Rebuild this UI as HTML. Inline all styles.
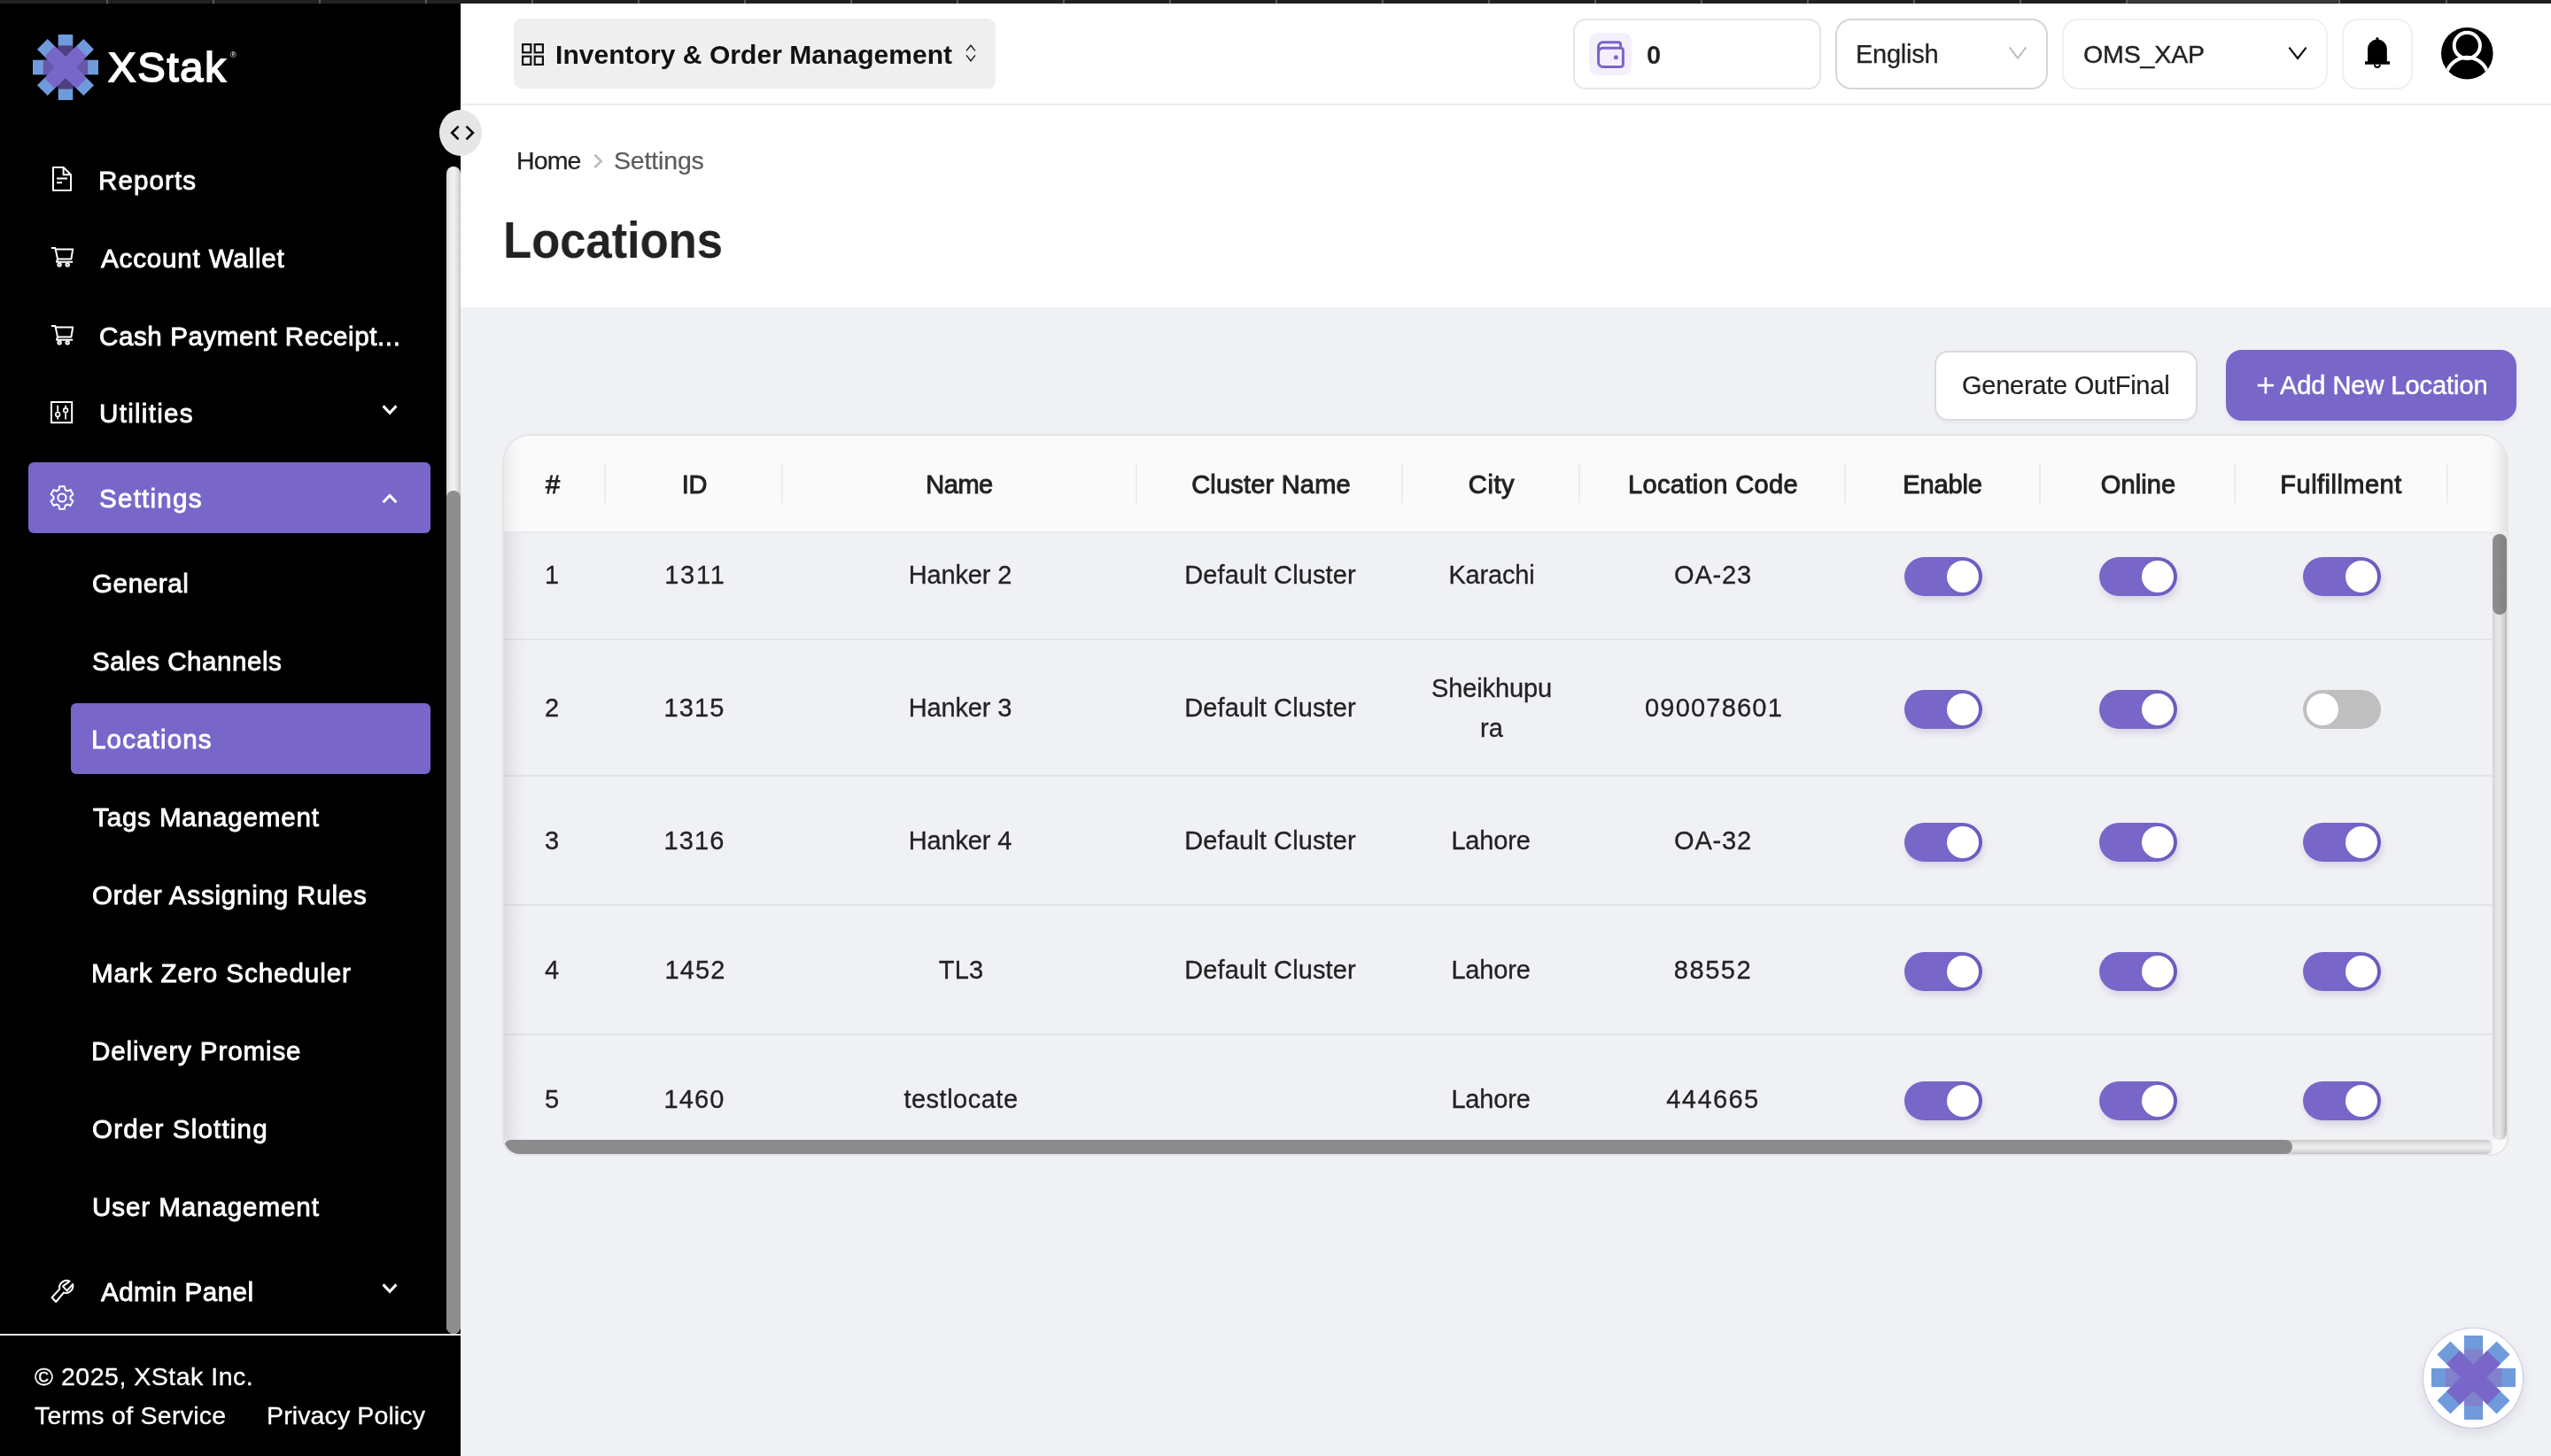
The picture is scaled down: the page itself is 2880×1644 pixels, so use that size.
<!DOCTYPE html>
<html><head><meta charset="utf-8"><title>Locations</title>
<style>
*{box-sizing:border-box;margin:0;padding:0}
html,body{width:2880px;height:1644px;overflow:hidden;background:#f0f1f5;font-family:"Liberation Sans",sans-serif;}
.a{position:absolute}
.t{position:absolute;white-space:nowrap;line-height:40px;height:40px;will-change:transform}
.tc{position:absolute;white-space:nowrap;line-height:40px;height:40px;text-align:center;will-change:transform}
svg{position:absolute;overflow:visible}
/* top strip */
#strip{left:0;top:0;width:2880px;height:4px;background:#212121}
#strip i{position:absolute;top:0;width:2px;height:4px;background:#5a5a5a}
/* sidebar */
#side{left:0;top:4px;width:520px;height:1640px;background:#000}
.pill{background:#7966c9;border-radius:6px}
#sbtrack{left:504px;top:188px;width:16px;height:1318px;border-radius:8px;background:linear-gradient(90deg,#d6d6d6 0,#ededed 28%,#f1f1f1 55%,#e0e0e0 78%,#c4c4c4 100%)}
#sbthumb{left:504px;top:554px;width:16px;height:952px;border-radius:8px;background:#8e8e8e}
/* header */
#hdr{left:520px;top:4px;width:2360px;height:115px;background:#fff;border-bottom:2px solid #ededed}
#phdr{left:520px;top:119px;width:2360px;height:227.5px;background:#fff}
#selpill{left:580px;top:21px;width:544px;height:79px;border-radius:9px;background:#efefef}
.box{background:#fff;border:2px solid #e6e6e6;border-radius:16px}
/* table */
#card{left:569px;top:492px;width:2261px;height:811px;border-radius:30px 30px 18px 18px;background:#f0f1f5;overflow:hidden;box-shadow:0 0 0 2px #e5e5e6}
#thead{left:0;top:0;width:2262px;height:110px;background:#fafafa;border-bottom:2px solid #ebebed}
.sep{position:absolute;top:32px;width:2px;height:44px;background:#ececec}
.rl{position:absolute;left:0;width:2245px;height:2px;background:#e2e3e8}
.sw{position:absolute;width:88px;height:44px;border-radius:22px;background:linear-gradient(90deg,#7966c9 0,#7966c9 55%,#6c59bd 100%);box-shadow:2px 5px 7px rgba(90,80,150,.17)}
.sw b{position:absolute;left:48px;top:4px;width:36px;height:36px;border-radius:18px;background:#fff}
.sw.off{background:#bfbfbf;box-shadow:none}
.sw.off b{left:4px}
</style></head><body>
<div id="strip" class="a"><i style="left:120px"></i><i style="left:240px"></i><i style="left:360px"></i><i style="left:480px"></i><i style="left:600px"></i><i style="left:720px"></i><i style="left:840px"></i><i style="left:960px"></i><i style="left:1080px"></i><i style="left:1200px"></i><i style="left:1320px"></i><i style="left:1440px"></i><i style="left:1560px"></i><i style="left:1680px"></i><i style="left:1800px"></i><i style="left:1920px"></i><i style="left:2040px"></i><i style="left:2160px"></i><i style="left:2280px"></i><div class="a" style="left:2400px;top:0;width:242px;height:3px;background:#3b3b3b"></div><i style="left:2400px"></i><i style="left:2640px"></i><i style="left:2761px"></i></div>

<!-- SIDEBAR -->
<div id="side" class="a"></div>
<svg style="left:37px;top:39px" width="74" height="74" viewBox="-37 -37 74 74">
<rect x="-8.3" y="-37" width="16.6" height="74" fill="#6f9bdc"/><rect x="-37" y="-8.3" width="74" height="16.6" fill="#6f9bdc"/>
<rect x="-8.3" y="-24.6" width="16.6" height="49.2" fill="#4e3e82"/><rect x="-25.2" y="-8.3" width="50.4" height="16.6" fill="#6757a8"/>
<g transform="rotate(45)"><rect x="-8.3" y="-37" width="16.6" height="74" fill="#6f9bdc"/><rect x="-37" y="-8.3" width="74" height="16.6" fill="#6f9bdc"/><rect x="-8.3" y="-25.5" width="16.6" height="51" fill="#7966c9"/><rect x="-25.5" y="-8.3" width="51" height="16.6" fill="#7966c9"/></g>
</svg>
<div class="a pill" style="left:32px;top:522px;width:454px;height:80px"></div>
<div class="a pill" style="left:80px;top:794px;width:406px;height:80px"></div>
<!-- icons -->
<svg style="left:59px;top:188px" width="22" height="28" viewBox="0 0 22 28" fill="none" stroke="#fff" stroke-width="2" stroke-linejoin="round"><path d="M1 1H12.6L21 9.2V27H1Z"/><path d="M12.6 1V9.2H21"/><path d="M5 13.6H17M5 18.2H11"/></svg>
<svg style="left:57.8px;top:279.4px" width="25" height="23" viewBox="0 0 25 23" fill="none" stroke="#fff" stroke-width="2" stroke-linejoin="round"><path d="M0 1H4.4L7 13.4H22.4L24.2 2.6H4.8"/><path d="M7 13.4L6 16.8H24.2"/><circle cx="9.1" cy="19.9" r="1.7"/><circle cx="18.2" cy="19.9" r="1.7"/></svg>
<svg style="left:57.8px;top:367.4px" width="25" height="23" viewBox="0 0 25 23" fill="none" stroke="#fff" stroke-width="2" stroke-linejoin="round"><path d="M0 1H4.4L7 13.4H22.4L24.2 2.6H4.8"/><path d="M7 13.4L6 16.8H24.2"/><circle cx="9.1" cy="19.9" r="1.7"/><circle cx="18.2" cy="19.9" r="1.7"/></svg>
<svg style="left:57.4px;top:453.4px" width="25.2" height="25.2" viewBox="0 0 25.2 25.2" fill="none" stroke="#fff" stroke-width="2"><rect x="1" y="1" width="23.2" height="23.2"/><path d="M8.2 4.8V11.8M8.2 18V20.6M17.1 4.8V7.2M17.1 13.4V20.6" stroke-width="1.8"/><circle cx="8.2" cy="14.9" r="2.4" stroke-width="1.6"/><circle cx="17.1" cy="10.3" r="2.4" stroke-width="1.6"/></svg>
<svg style="left:56px;top:548px" width="28" height="28" viewBox="0 0 28 28" fill="none" stroke="#fff" stroke-width="2" stroke-linejoin="round"><path d="M10.47 5.07 L11.03 1.34 L16.97 1.34 L17.53 5.07 L19.96 6.48 L23.48 5.10 L26.45 10.24 L23.50 12.60 L23.50 15.40 L26.45 17.76 L23.48 22.90 L19.96 21.52 L17.53 22.93 L16.97 26.66 L11.03 26.66 L10.47 22.93 L8.04 21.52 L4.52 22.90 L1.55 17.76 L4.50 15.40 L4.50 12.60 L1.55 10.24 L4.52 5.10 L8.04 6.48Z"/><circle cx="14" cy="14" r="4.6"/></svg>
<svg style="left:57.9px;top:1445px" width="26" height="26" viewBox="0 0 26 26" fill="none" stroke="#fff" stroke-width="2" stroke-linejoin="round"><path d="M20.6 1.6L13 7.4L17.6 12.4L24.2 5A8.2 8.2 0 0 1 13.8 14.6L5.2 25L0.6 20L9.2 10.6A8.2 8.2 0 0 1 20.6 1.6Z"/></svg>
<!-- chevrons -->
<svg style="left:431px;top:456.4px" width="18" height="14" viewBox="0 0 18 14" fill="none" stroke="#fff" stroke-width="3"><path d="M1.6 2.4L9 10.2L16.4 2.4"/></svg>
<svg style="left:431px;top:556.2px" width="18" height="14" viewBox="0 0 18 14" fill="none" stroke="#fff" stroke-width="3"><path d="M1.6 11.2L9 3.4L16.4 11.2"/></svg>
<svg style="left:431px;top:1448.4px" width="18" height="14" viewBox="0 0 18 14" fill="none" stroke="#fff" stroke-width="3"><path d="M1.6 2.4L9 10.2L16.4 2.4"/></svg>
<div id="sbtrack" class="a"></div><div id="sbthumb" class="a"></div>
<div class="a" style="left:0;top:1506px;width:520px;height:2px;background:#e8e8e8"></div>

<!-- HEADER -->
<div id="hdr" class="a"></div><div id="phdr" class="a"></div>
<div id="selpill" class="a"></div>
<svg style="left:588.5px;top:48.6px" width="25" height="25" viewBox="0 0 25 25" fill="none" stroke="#111" stroke-width="2.2"><rect x="1.1" y="1.1" width="9.2" height="9.2"/><rect x="14.7" y="1.1" width="9.2" height="9.2"/><rect x="1.1" y="14.7" width="9.2" height="9.2"/><rect x="14.7" y="14.7" width="9.2" height="9.2"/></svg>
<svg style="left:1090px;top:50px" width="12" height="20" viewBox="0 0 12 20" fill="none" stroke="#222" stroke-width="1.5"><path d="M1 7.4L6 1.2L11 7.4M1 12.4L6 18.8L11 12.4"/></svg>
<div class="a" style="left:495.8px;top:124px;width:48.4px;height:52px;border-radius:24.2px/26px;background:#e6e6e6"></div>
<svg style="left:506px;top:140px" width="32" height="20" viewBox="0 0 32 20" fill="none" stroke="#000" stroke-width="2.6"><path d="M11.6 2.6L4.2 10L11.6 17.4M20.5 2.6L27.9 10L20.5 17.4"/></svg>
<svg style="left:670px;top:173px" width="12" height="18" viewBox="0 0 12 18" fill="none" stroke="#bdbdbd" stroke-width="2.6"><path d="M1.3 1.7L8.8 9L1.3 16.3"/></svg>

<div class="a box" style="left:1776px;top:21px;width:280px;height:80px;border-radius:14px"></div>
<div class="a" style="left:1794px;top:37px;width:48px;height:48px;border-radius:9px;background:#f4effd"></div>
<svg style="left:1802.6px;top:45.6px" width="31" height="31" viewBox="0 0 31 31" fill="none" stroke="#7966c9" stroke-width="3" stroke-linejoin="round" stroke-linecap="round"><path d="M1.6 12V6.6A4.8 4.8 0 0 1 6.4 1.8H24A2.6 2.6 0 0 1 26.6 4.4V8"/><path d="M6.4 8.2H27A2.4 2.4 0 0 1 29.4 10.6V27A2.4 2.4 0 0 1 27 29.4H6.4A4.8 4.8 0 0 1 1.6 24.6V13A4.8 4.8 0 0 1 6.4 8.2Z"/><circle cx="21.4" cy="18.7" r="1.3" fill="#7966c9" stroke-width="2.4"/></svg>
<div class="a box" style="left:2072px;top:21px;width:240px;height:80px;border-color:#d6d6d6;border-radius:18px"></div>
<svg style="left:2267px;top:52px" width="22" height="16" viewBox="0 0 22 16" fill="none" stroke="#bdbdbd" stroke-width="2"><path d="M1.6 1.4L11 13.6L20.4 1.4"/></svg>
<div class="a box" style="left:2328px;top:21px;width:300px;height:80px;border-color:#f0f0f0;border-radius:18px"></div>
<svg style="left:2583px;top:52px" width="22" height="16" viewBox="0 0 22 16" fill="none" stroke="#111" stroke-width="2.2"><path d="M1.4 1.6L11 14L20.6 1.6"/></svg>
<div class="a box" style="left:2644px;top:21px;width:80px;height:80px;border-color:#f0f0f0;border-radius:18px"></div>
<svg style="left:2670px;top:42.4px" width="28" height="36" viewBox="0 0 28 36"><path d="M12.4 2.6V1.4A1.5 1.5 0 0 1 15.4 1.4V2.6A11 11 0 0 1 24.8 13.6V27.2H28V30.8H0V27.2H3V13.6A11 11 0 0 1 12.4 2.6Z" fill="#000"/><path d="M10.9 31A3 3 0 0 0 16.9 31" fill="none" stroke="#000" stroke-width="1.8"/></svg>
<svg style="left:2755.8px;top:31px" width="58.6" height="58.6" viewBox="0 0 58.6 58.6"><defs><clipPath id="avc"><circle cx="29.3" cy="29.3" r="29.3"/></clipPath></defs><circle cx="29.3" cy="29.3" r="29.3" fill="#000"/><g clip-path="url(#avc)" fill="none" stroke="#fff" stroke-width="4"><circle cx="29.3" cy="20.4" r="14.6"/><path d="M6 52A24 24 0 0 1 52.6 52"/></g></svg>

<!-- BUTTONS -->
<div class="a" style="left:2183.5px;top:395.5px;width:297px;height:79px;border-radius:15px;background:#fff;border:2px solid #dadada;box-shadow:0 3px 3px rgba(0,0,0,.03)"></div>
<div class="a" style="left:2513px;top:395px;width:328px;height:80px;border-radius:18px;background:#7966c9;box-shadow:0 4px 4px rgba(80,70,140,.08)"></div>

<svg style="left:2548px;top:425px" width="20" height="20" viewBox="0 0 20 20" fill="none" stroke="#fff" stroke-width="2.7"><path d="M0.7 10.2H19M9.85 1V19.4"/></svg>
<!-- TABLE -->
<div id="card" class="a">
<div id="thead" class="a"></div>
<i class="sep" style="left:113px"></i><i class="sep" style="left:313px"></i><i class="sep" style="left:713px"></i><i class="sep" style="left:1013px"></i><i class="sep" style="left:1213px"></i><i class="sep" style="left:1513px"></i><i class="sep" style="left:1733px"></i><i class="sep" style="left:1953px"></i><i class="sep" style="left:2193px"></i>
<i class="rl" style="top:229px"></i><i class="rl" style="top:383px"></i><i class="rl" style="top:529px"></i><i class="rl" style="top:675px"></i>
<div class="a" style="left:0;top:0;width:22px;height:110px;background:linear-gradient(90deg,rgba(40,40,50,.07),rgba(40,40,50,.02) 50%,rgba(40,40,50,0))"></div><div class="a" style="left:0;top:110px;width:24px;height:686px;background:linear-gradient(90deg,rgba(50,50,80,.10),rgba(50,50,80,.03) 55%,rgba(50,50,80,0))"></div>
<div class="a" style="left:2243px;top:0;width:18px;height:108px;background:linear-gradient(90deg,rgba(30,30,30,0),rgba(30,30,30,.035) 45%,rgba(30,30,30,.105))"></div>
<!-- toggles -->
<div class="sw" style="left:1581px;top:137px"><b></b></div><div class="sw" style="left:1801px;top:137px"><b></b></div><div class="sw" style="left:2031px;top:137px"><b></b></div>
<div class="sw" style="left:1581px;top:287px"><b></b></div><div class="sw" style="left:1801px;top:287px"><b></b></div><div class="sw off" style="left:2031px;top:287px"><b></b></div>
<div class="sw" style="left:1581px;top:437px"><b></b></div><div class="sw" style="left:1801px;top:437px"><b></b></div><div class="sw" style="left:2031px;top:437px"><b></b></div>
<div class="sw" style="left:1581px;top:583px"><b></b></div><div class="sw" style="left:1801px;top:583px"><b></b></div><div class="sw" style="left:2031px;top:583px"><b></b></div>
<div class="sw" style="left:1581px;top:729px"><b></b></div><div class="sw" style="left:1801px;top:729px"><b></b></div><div class="sw" style="left:2031px;top:729px"><b></b></div>
<!-- scrollbars -->
<div class="a" style="left:2245px;top:110px;width:16px;height:685px;border-radius:8px;background:linear-gradient(90deg,#d2d2d2 0,#e4e4e4 25%,#e6e6e6 50%,#d4d4d4 75%,#b9b9b9 100%)"></div>
<div class="a" style="left:2245px;top:111px;width:16px;height:91px;border-radius:8px;background:linear-gradient(90deg,#8f8f8f,#888 60%,#808080)"></div>
<div class="a" style="left:0;top:795px;width:2245px;height:16px;border-radius:8px;background:linear-gradient(180deg,#c6c6c6 0,#e2e2e2 25%,#eeeeee 55%,#dcdcdc 78%,#c2c2c2 100%)"></div>
<div class="a" style="left:0;top:795px;width:2019px;height:16px;border-radius:8px;background:#8b8b8b"></div>
<div class="a" style="left:2245px;top:795px;width:16px;height:16px;background:#f9f9f9"></div>
</div>

<!-- FLOAT -->
<div class="a" style="left:2736px;top:1500px;width:112px;height:112px;border-radius:56px;background:#fff;box-shadow:0 6px 14px rgba(60,60,100,.12),0 0 0 1px rgba(121,102,201,.25)"></div>
<svg style="left:2744.5px;top:1508px" width="95" height="95" viewBox="-47.5 -47.5 95 95">
<rect x="-10.6" y="-47.5" width="21.2" height="95" fill="#6f9bdc"/><rect x="-47.5" y="-10.6" width="95" height="21.2" fill="#6f9bdc"/>
<rect x="-10.6" y="-32" width="21.2" height="64" fill="#8082cc"/><rect x="-32" y="-10.6" width="64" height="21.2" fill="#8082cc"/>
<g transform="rotate(45)"><rect x="-10.6" y="-47.5" width="21.2" height="95" fill="#6f9bdc"/><rect x="-47.5" y="-10.6" width="95" height="21.2" fill="#6f9bdc"/><rect x="-10.6" y="-32.5" width="21.2" height="65" fill="#7966c9"/><rect x="-32.5" y="-10.6" width="65" height="21.2" fill="#7966c9"/></g>
</svg>

<div id="logo" class="t" style="font-size:47px;color:#fff;top:55.6px;letter-spacing:1.85px;-webkit-text-stroke:1.8px #fff;left:122.2px;">XStak</div>
<div id="reg" class="t" style="font-size:9px;color:#fff;top:42.2px;left:259.8px;">®</div>
<div id="m1" class="t" style="font-size:29.6px;color:#fff;top:183.55px;letter-spacing:1.07px;-webkit-text-stroke:0.85px #fff;left:111px;">Reports</div>
<div id="m2" class="t" style="font-size:29.6px;color:#fff;top:271.65px;letter-spacing:0.81px;-webkit-text-stroke:0.85px #fff;left:114px;">Account Wallet</div>
<div id="m3" class="t" style="font-size:29.6px;color:#fff;top:359.55px;letter-spacing:0.57px;-webkit-text-stroke:0.85px #fff;left:112px;">Cash Payment Receipt...</div>
<div id="m4" class="t" style="font-size:29.6px;color:#fff;top:447.45px;letter-spacing:1.27px;-webkit-text-stroke:0.85px #fff;left:112px;">Utilities</div>
<div id="m5" class="t" style="font-size:29.6px;color:#fff;top:543.35px;letter-spacing:1.22px;-webkit-text-stroke:0.85px #fff;left:112px;">Settings</div>
<div id="s1" class="t" style="font-size:29.6px;color:#fff;top:639.15px;letter-spacing:0.58px;-webkit-text-stroke:0.85px #fff;left:104px;">General</div>
<div id="s2" class="t" style="font-size:29.6px;color:#fff;top:727.15px;letter-spacing:0.50px;-webkit-text-stroke:0.85px #fff;left:104px;">Sales Channels</div>
<div id="s3" class="t" style="font-size:29.6px;color:#fff;top:815.35px;letter-spacing:1.11px;-webkit-text-stroke:0.85px #fff;left:103px;">Locations</div>
<div id="s4" class="t" style="font-size:29.6px;color:#fff;top:903.35px;letter-spacing:0.83px;-webkit-text-stroke:0.85px #fff;left:105px;">Tags Management</div>
<div id="s5" class="t" style="font-size:29.6px;color:#fff;top:991.35px;letter-spacing:0.77px;-webkit-text-stroke:0.85px #fff;left:104px;">Order Assigning Rules</div>
<div id="s6" class="t" style="font-size:29.6px;color:#fff;top:1079.35px;letter-spacing:0.92px;-webkit-text-stroke:0.85px #fff;left:103px;">Mark Zero Scheduler</div>
<div id="s7" class="t" style="font-size:29.6px;color:#fff;top:1167.35px;letter-spacing:0.86px;-webkit-text-stroke:0.85px #fff;left:103px;">Delivery Promise</div>
<div id="s8" class="t" style="font-size:29.6px;color:#fff;top:1255.35px;letter-spacing:1.16px;-webkit-text-stroke:0.85px #fff;left:104px;">Order Slotting</div>
<div id="s9" class="t" style="font-size:29.6px;color:#fff;top:1343.15px;letter-spacing:0.89px;-webkit-text-stroke:0.85px #fff;left:104px;">User Management</div>
<div id="m6" class="t" style="font-size:29.6px;color:#fff;top:1439.35px;letter-spacing:0.42px;-webkit-text-stroke:0.85px #fff;left:114px;">Admin Panel</div>
<div id="f1" class="t" style="font-size:28.5px;color:#fff;top:1533.6px;letter-spacing:0.51px;-webkit-text-stroke:0.3px #fff;left:39px;">© 2025, XStak Inc.</div>
<div id="f2" class="t" style="font-size:28.5px;color:#fff;top:1577.5px;letter-spacing:0.26px;-webkit-text-stroke:0.3px #fff;left:39px;">Terms of Service</div>
<div id="f3" class="t" style="font-size:28.5px;color:#fff;top:1577.5px;letter-spacing:0.12px;-webkit-text-stroke:0.3px #fff;left:301.4px;">Privacy Policy</div>
<div id="h1" class="t" style="font-size:30px;color:#111;top:42.3px;font-weight:700;letter-spacing:0.05px;left:626.5px;">Inventory &amp; Order Management</div>
<div id="h2" class="t" style="font-size:29px;color:#222;top:42px;font-weight:700;left:1858.5px;">0</div>
<div id="h3" class="t" style="font-size:29px;color:#222;top:41px;letter-spacing:-0.25px;-webkit-text-stroke:0.25px #222;left:2095.4px;">English</div>
<div id="h4" class="t" style="font-size:28.5px;color:#222;top:41.2px;letter-spacing:-0.13px;-webkit-text-stroke:0.4px #222;left:2352px;">OMS_XAP</div>
<div id="b1" class="t" style="font-size:28.5px;color:#222;top:161px;letter-spacing:-0.90px;-webkit-text-stroke:0.25px #222;left:583.3px;">Home</div>
<div id="b2" class="t" style="font-size:28.5px;color:#5c5c5c;top:161px;letter-spacing:-0.16px;-webkit-text-stroke:0.25px #5c5c5c;left:692.6px;">Settings</div>
<div id="ttl" class="t" style="font-size:58px;color:#222;top:251px;font-weight:700;letter-spacing:-0.17px;transform:scaleX(0.91);transform-origin:0 50%;left:567.5px;">Locations</div>
<div id="g1" class="t" style="font-size:29px;color:#222;top:414.8px;letter-spacing:-0.25px;-webkit-text-stroke:0.2px #222;left:2214.8px;">Generate OutFinal</div>
<div id="g2" class="t" style="font-size:29px;color:#fff;top:414.8px;letter-spacing:-0.05px;-webkit-text-stroke:0.5px #fff;left:2573.5px;">Add New Location</div>
<div id="th0" class="tc" style="font-size:29px;color:#222;top:527.3px;-webkit-text-stroke:0.95px #222;left:324px;width:600px;"><span>#</span></div>
<div id="th1" class="tc" style="font-size:29px;color:#222;top:527.3px;letter-spacing:-0.17px;-webkit-text-stroke:0.95px #222;left:483.815px;width:600px;"><span>ID</span></div>
<div id="th2" class="tc" style="font-size:29px;color:#222;top:527.3px;letter-spacing:-0.44px;-webkit-text-stroke:0.95px #222;left:783.278px;width:600px;"><span>Name</span></div>
<div id="th3" class="tc" style="font-size:29px;color:#222;top:527.3px;letter-spacing:0.20px;-webkit-text-stroke:0.95px #222;left:1134.5px;width:600px;"><span>Cluster Name</span></div>
<div id="th4" class="tc" style="font-size:29px;color:#222;top:527.3px;letter-spacing:0.59px;-webkit-text-stroke:0.95px #222;left:1383.5px;width:600px;"><span>City</span></div>
<div id="th5" class="tc" style="font-size:29px;color:#222;top:527.3px;letter-spacing:0.39px;-webkit-text-stroke:0.95px #222;left:1633.5px;width:600px;"><span>Location Code</span></div>
<div id="th6" class="tc" style="font-size:29px;color:#222;top:527.3px;letter-spacing:-0.10px;-webkit-text-stroke:0.95px #222;left:1893.45px;width:600px;"><span>Enable</span></div>
<div id="th7" class="tc" style="font-size:29px;color:#222;top:527.3px;letter-spacing:0.08px;-webkit-text-stroke:0.95px #222;left:2114.34px;width:600px;"><span>Online</span></div>
<div id="th8" class="tc" style="font-size:29px;color:#222;top:527.3px;letter-spacing:0.47px;-webkit-text-stroke:0.95px #222;left:2342.93px;width:600px;"><span>Fulfillment</span></div>
<div id="c0_0" class="tc" style="font-size:29px;color:#222;top:628.5px;-webkit-text-stroke:0.3px #222;left:323px;width:600px;"><span>1</span></div>
<div id="c0_1" class="tc" style="font-size:29px;color:#222;top:628.5px;letter-spacing:1.82px;-webkit-text-stroke:0.3px #222;left:484.909px;width:600px;"><span>1311</span></div>
<div id="c0_2" class="tc" style="font-size:29px;color:#222;top:628.5px;letter-spacing:-0.12px;-webkit-text-stroke:0.3px #222;left:783.94px;width:600px;"><span>Hanker 2</span></div>
<div id="c0_3" class="tc" style="font-size:29px;color:#222;top:628.5px;letter-spacing:0.12px;-webkit-text-stroke:0.3px #222;left:1133.56px;width:600px;"><span>Default Cluster</span></div>
<div id="c0_4" class="tc" style="font-size:29px;color:#222;top:628.5px;letter-spacing:-0.17px;-webkit-text-stroke:0.3px #222;left:1383.92px;width:600px;"><span>Karachi</span></div>
<div id="c0_5" class="tc" style="font-size:29px;color:#222;top:628.5px;letter-spacing:0.80px;-webkit-text-stroke:0.3px #222;left:1633.9px;width:600px;"><span>OA-23</span></div>
<div id="c1_0" class="tc" style="font-size:29px;color:#222;top:778.5px;-webkit-text-stroke:0.3px #222;left:323px;width:600px;"><span>2</span></div>
<div id="c1_1" class="tc" style="font-size:29px;color:#222;top:778.5px;letter-spacing:1.10px;-webkit-text-stroke:0.3px #222;left:484.052px;width:600px;"><span>1315</span></div>
<div id="c1_2" class="tc" style="font-size:29px;color:#222;top:778.5px;letter-spacing:-0.12px;-webkit-text-stroke:0.3px #222;left:783.94px;width:600px;"><span>Hanker 3</span></div>
<div id="c1_3" class="tc" style="font-size:29px;color:#222;top:778.5px;letter-spacing:0.12px;-webkit-text-stroke:0.3px #222;left:1133.56px;width:600px;"><span>Default Cluster</span></div>
<div id="c1_5" class="tc" style="font-size:29px;color:#222;top:778.5px;letter-spacing:1.21px;-webkit-text-stroke:0.3px #222;left:1634.6px;width:600px;"><span>090078601</span></div>
<div id="c2_0" class="tc" style="font-size:29px;color:#222;top:928.7px;-webkit-text-stroke:0.3px #222;left:323px;width:600px;"><span>3</span></div>
<div id="c2_1" class="tc" style="font-size:29px;color:#222;top:928.7px;letter-spacing:1.17px;-webkit-text-stroke:0.3px #222;left:484.086px;width:600px;"><span>1316</span></div>
<div id="c2_2" class="tc" style="font-size:29px;color:#222;top:928.7px;letter-spacing:-0.12px;-webkit-text-stroke:0.3px #222;left:783.94px;width:600px;"><span>Hanker 4</span></div>
<div id="c2_3" class="tc" style="font-size:29px;color:#222;top:928.7px;letter-spacing:0.12px;-webkit-text-stroke:0.3px #222;left:1133.56px;width:600px;"><span>Default Cluster</span></div>
<div id="c2_4" class="tc" style="font-size:29px;color:#222;top:928.7px;letter-spacing:-0.18px;-webkit-text-stroke:0.3px #222;left:1383.41px;width:600px;"><span>Lahore</span></div>
<div id="c2_5" class="tc" style="font-size:29px;color:#222;top:928.7px;letter-spacing:0.80px;-webkit-text-stroke:0.3px #222;left:1633.9px;width:600px;"><span>OA-32</span></div>
<div id="c3_0" class="tc" style="font-size:29px;color:#222;top:1074.7px;-webkit-text-stroke:0.3px #222;left:323px;width:600px;"><span>4</span></div>
<div id="c3_1" class="tc" style="font-size:29px;color:#222;top:1074.7px;letter-spacing:1.17px;-webkit-text-stroke:0.3px #222;left:485.086px;width:600px;"><span>1452</span></div>
<div id="c3_2" class="tc" style="font-size:29px;color:#222;top:1074.7px;letter-spacing:0.12px;-webkit-text-stroke:0.3px #222;left:784.561px;width:600px;"><span>TL3</span></div>
<div id="c3_3" class="tc" style="font-size:29px;color:#222;top:1074.7px;letter-spacing:0.12px;-webkit-text-stroke:0.3px #222;left:1133.56px;width:600px;"><span>Default Cluster</span></div>
<div id="c3_4" class="tc" style="font-size:29px;color:#222;top:1074.7px;letter-spacing:-0.18px;-webkit-text-stroke:0.3px #222;left:1383.41px;width:600px;"><span>Lahore</span></div>
<div id="c3_5" class="tc" style="font-size:29px;color:#222;top:1074.7px;letter-spacing:1.57px;-webkit-text-stroke:0.3px #222;left:1634.28px;width:600px;"><span>88552</span></div>
<div id="c4_0" class="tc" style="font-size:29px;color:#222;top:1220.5px;-webkit-text-stroke:0.3px #222;left:323px;width:600px;"><span>5</span></div>
<div id="c4_1" class="tc" style="font-size:29px;color:#222;top:1220.5px;letter-spacing:1.17px;-webkit-text-stroke:0.3px #222;left:484.086px;width:600px;"><span>1460</span></div>
<div id="c4_2" class="tc" style="font-size:29px;color:#222;top:1220.5px;letter-spacing:0.50px;-webkit-text-stroke:0.3px #222;left:784.749px;width:600px;"><span>testlocate</span></div>
<div id="c4_4" class="tc" style="font-size:29px;color:#222;top:1220.5px;letter-spacing:-0.18px;-webkit-text-stroke:0.3px #222;left:1383.41px;width:600px;"><span>Lahore</span></div>
<div id="c4_5" class="tc" style="font-size:29px;color:#222;top:1220.5px;letter-spacing:1.43px;-webkit-text-stroke:0.3px #222;left:1634.21px;width:600px;"><span>444665</span></div>
<div id="c1_4a" class="tc" style="font-size:29px;color:#222;top:757px;letter-spacing:-0.13px;-webkit-text-stroke:0.3px #222;left:1383.94px;width:600px;"><span>Sheikhupu</span></div>
<div id="c1_4b" class="tc" style="font-size:29px;color:#222;top:801.8px;-webkit-text-stroke:0.3px #222;left:1383.5px;width:600px;"><span>ra</span></div>
<script>(function(){try{var w=window.innerWidth||document.documentElement.clientWidth;if(w&&Math.abs(w-2880)>4){document.body.style.zoom=(w/2880);}}catch(e){}})();</script>
</body></html>
